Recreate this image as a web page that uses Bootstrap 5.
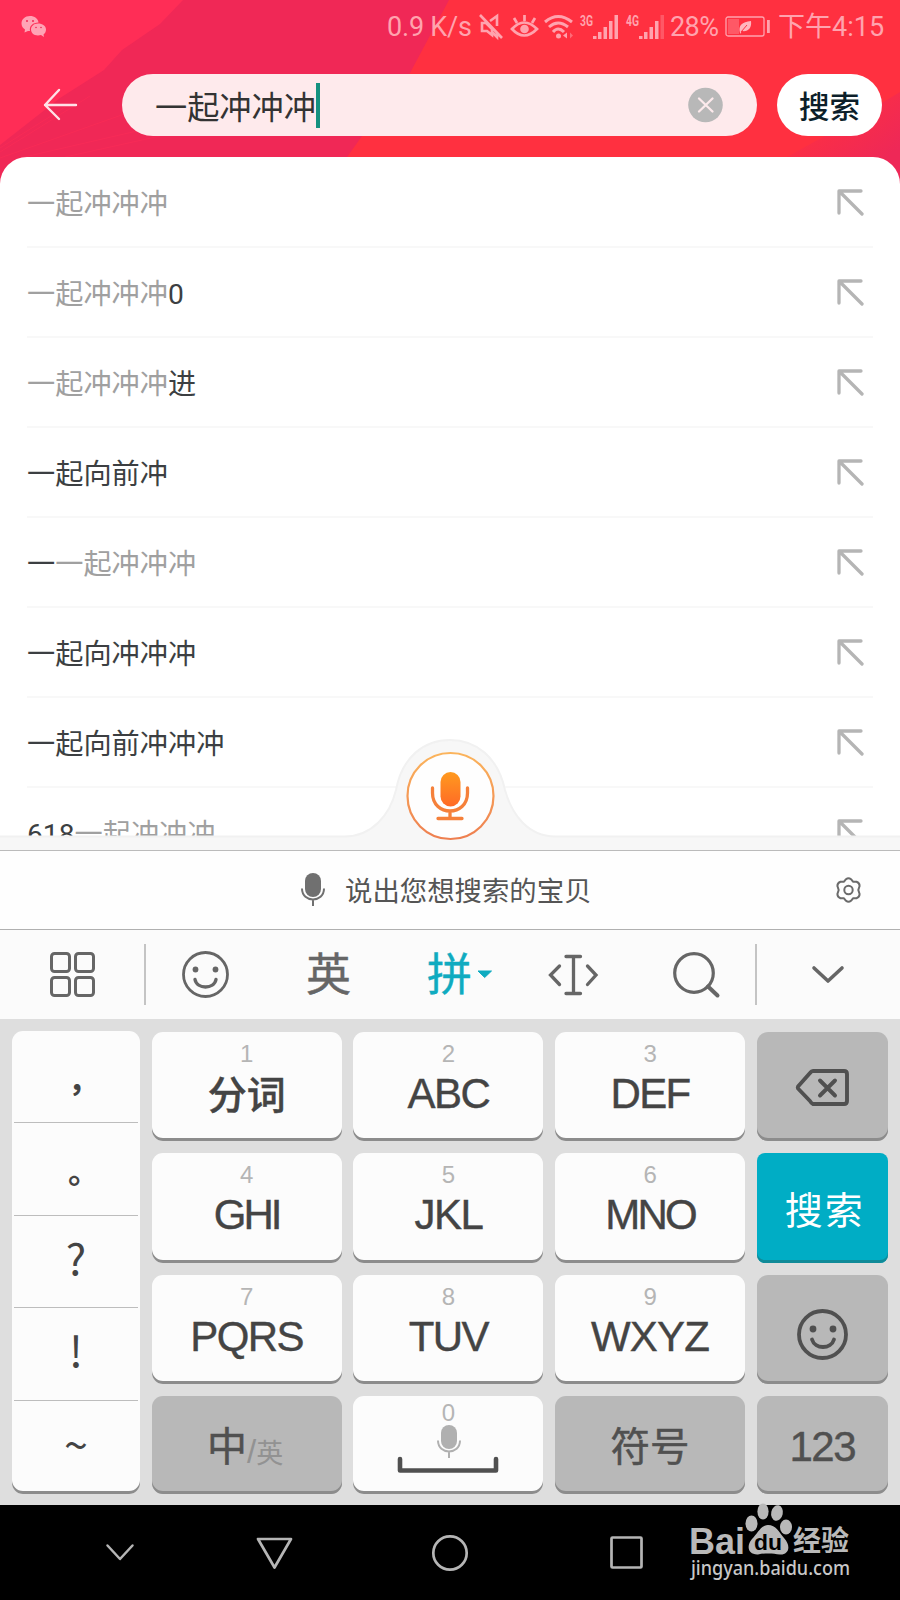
<!DOCTYPE html>
<html lang="zh-CN">
<head>
<meta charset="utf-8">
<meta name="viewport" content="width=device-width, initial-scale=1">
<title>搜索</title>
<link href="https://cdn.jsdelivr.net/npm/bootstrap@5.3.0/dist/css/bootstrap.min.css" rel="stylesheet">
<style>
body{width:900px;height:1600px;overflow:hidden;background:#fff;font-family:Roboto,"Noto Sans CJK SC",sans-serif;color:#333}
svg{display:block;flex:none;overflow:visible}
.top-area{height:184px;margin-bottom:-27px}
.top-bg{left:0;top:0;z-index:0}
.status{height:54px;padding:0 18px 0 21px;color:#ffa3ae;font-size:27px;line-height:58px;white-space:nowrap}
.status span{flex:none}
.searchrow{height:62px;margin-top:20px}
.field{width:635px;height:62px;border-radius:31px;background:#feeaec;margin-left:44px;padding-left:33px;font-size:32.2px;line-height:62px}
.field .typed{margin-top:5px}
.caret-bar{width:4.5px;height:45px;background:#15917f}
.go{width:105px;height:62px;border-radius:31px;background:#fff;margin-left:20px;font-size:30.5px;font-weight:500;color:#0c1f2a;line-height:68px;border:0;padding:0}
.panel{height:693px;border-radius:27px 27px 0 0;background:#fff;overflow:hidden;z-index:1;padding-top:1px}
.sugg{height:90px;margin:0 27px;border-bottom:2px solid #f8f8f8;font-size:28.2px;line-height:80px;padding-right:9px;color:#3c3f42}
.sugg span{margin-top:5px}
.sugg i{font-style:normal;color:#a0a0a0}
.sugg svg{margin-top:1px}
.bump{left:0;bottom:0}
.voice{height:80px;border-top:1px solid #bbb;border-bottom:1px solid #b0b0b0;background:#fefefe;font-size:27.4px;color:#555;padding:0 39px 0 300px}
.tools{height:89px;background:#fbfbfb}
.tools .cjk{font-size:45px;line-height:80px;color:#666;margin-top:3px;-webkit-text-stroke:.4px}
.vline{width:2px;height:61px;background:#c4c4c4}
.keys{height:486px;background:#dedede;padding:13px 12px 0 12px;display:grid;grid-template-columns:128px 190px 190px 190px 131px;grid-template-rows:109px 109.5px 109.5px 98px;gap:12px 11.7px}
.k{background:#fcfcfc;border-radius:11px;box-shadow:inset 0 -3px 0 #8c8c8c;text-align:center;color:#444;font-family:"Liberation Sans","Noto Sans CJK SC",sans-serif}
.k .n{display:block;font-size:24px;line-height:24px;padding-top:10px;color:#b5b5b5}
.k .l{display:block;font-size:42px;line-height:44px;margin-top:6px;letter-spacing:-1.6px;-webkit-text-stroke:.4px #444}
.k .tight{letter-spacing:-3px}
.g{background:#b8b8b8;color:#505050}
.k.go-key{background:#00adc5;color:#fff;border-radius:8px;box-shadow:inset 0 -3px 0 #108a98}
.side{grid-row:1/5;margin-top:-1px;font-family:"Noto Sans CJK SC",sans-serif;padding:0 2px}
.side div{height:92.4px;line-height:80px;font-size:43px;border-bottom:1px solid #bdbdbd;font-weight:400;overflow:hidden}
.side .full{font-size:32px;line-height:92px;font-weight:700}
.side div:last-child{border:0}
.navb{height:95px;background:#000}
.mark-name{font-family:"Liberation Sans","Noto Sans CJK SC",sans-serif}
</style>
</head>
<body>
<header class="top-area position-relative">
  <svg class="top-bg position-absolute" width="900" height="184">
    <defs><linearGradient id="cr" x1="0" y1="0" x2="1" y2="1"><stop offset=".2" stop-color="#ff3040"/><stop offset=".8" stop-color="#ee2857"/></linearGradient></defs>
    <rect width="900" height="184" fill="#f02856"/>
    <path d="M0 0H183L160 24 122 50 104 70 60 98 0 145Z" fill="#ff2d56"/>
    <path d="M449 0H900V184H328L362 136 410 73Z" fill="#ff3040"/>
    <path d="M785 158L850 122 900 92V184H785Z" fill="url(#cr)"/>
    <path d="M0 152L90 96M0 158L130 112M20 158L150 128M65 157L160 136M0 148L70 104" stroke="#ff2d56" stroke-width="1" opacity=".5"/>
  </svg>
  <div class="status position-relative d-flex align-items-center">
    <svg width="26" height="22" viewBox="0 0 26 22" fill="#ffa3b5"><path d="M9 0C4 0 .5 3.300.5 7.500.5 10 1.800 12 4 13.500L3.500 16.500 7 15H9C8 10 12 6.500 17.500 6.500 17 2.500 13.500 0 9 0Z"/><path d="M17 7.500C12.500 7.500 10 10.500 10 13.500S12.500 19.500 17 19.500L20 19 23 21 22.500 18.500C24 17.500 25 15.500 25 13.500 25 10 21.500 7.500 17 7.500Z"/><g fill="#f02856"><circle cx="6" cy="5" r="1"/><circle cx="12" cy="5" r="1"/><circle cx="15" cy="11.500" r=".8"/><circle cx="20" cy="11.500" r=".8"/></g></svg>
    <span style="width:86px;margin-left:340px;letter-spacing:-.2px">0.9 K/s</span>
    <svg style="margin-left:6px" width="25" height="26" fill="none" stroke="#ffa3ae" stroke-width="2.600"><path d="M1 1L23 24M3 9H7L13 15V21L8 17H3ZM11 7L18 2V12M18 19V23L13 18"/></svg>
    <svg style="margin-left:7px" width="27" height="26" fill="none" stroke="#ffa3ae" stroke-width="2.700"><path d="M1 15Q13 2 26 15 13 28 1 15ZM13.500 1V7M3 4L6 9M24 4L21 9"/><circle cx="13.500" cy="15" r="4.300" fill="#ffa3ae" stroke="none"/></svg>
    <svg style="margin-left:6px" width="29" height="26" fill="none" stroke="#ffa3ae" stroke-width="3"><path d="M1 8Q14 -3 28 8M5 13Q14 5 24 13M9 18Q14 12 20 18"/><circle cx="14.500" cy="22" r="2.500" fill="#ffa3ae" stroke="none"/><path d="M19 21.500L23 18.500V24.500Z" fill="#ffa3ae" stroke="none"/><path d="M26 18.500L29 21.500 26 24.500Z" fill="#ffa3ae" stroke="none" opacity=".5"/></svg>
    <svg style="margin-left:7px" width="40" height="26" fill="#ffa3ae"><text x="0" y="12" font-size="15" font-weight="700" textLength="13" lengthAdjust="spacingAndGlyphs">3G</text><path d="M13 22h3.500v3h-3.500zM18 18h3.500v7H18zM23.500 13h3.500v12h-3.500zM29 7h3.500v18H29zM34.500 1h3.500v24h-3.500z"/></svg>
    <svg style="margin-left:6px" width="40" height="26" fill="#ffa3ae"><text x="0" y="12" font-size="15" font-weight="700" textLength="13" lengthAdjust="spacingAndGlyphs">4G</text><path d="M13 22h3.500v3h-3.500zM18 18h3.500v7H18zM23.500 13h3.500v12h-3.500zM29 7h3.500v18H29z"/><path d="M34.500 1h3.500v24h-3.500z" opacity=".35"/></svg>
    <span style="width:50px;margin-left:4px;letter-spacing:-.6px">28%</span>
    <svg style="margin-left:5px" width="46" height="22"><rect x="1" y="1" width="38" height="19" rx="2" fill="none" stroke="#ffa3ae" stroke-width="1.300"/><rect x="3" y="3" width="11" height="15" fill="#ffa3ae" opacity=".35"/><path d="M15 17C13 9 17 6 26 5 27 12 23 16 17 15L15 18Z" fill="#ffb5bd"/><path d="M16 16L22 9" stroke="#ff3040"/><rect x="42" y="4" width="2.800" height="13" fill="#ffa3ae"/></svg>
    <span style="margin-left:7px">下午4:15</span>
  </div>
  <div class="searchrow position-relative d-flex align-items-center">
    <svg style="margin-left:43px" width="35" height="32" fill="none" stroke="#ffe1e7" stroke-width="2.400" stroke-linecap="round" stroke-linejoin="round"><path d="M33 16H2M16 1L2 16 16 30"/></svg>
    <div class="field d-flex align-items-center"><span class="typed">一起冲冲冲</span><span class="caret-bar"></span>
      <svg class="ms-auto" style="margin-right:34px" width="35" height="35"><circle cx="17.500" cy="17" r="17.300" fill="#b8b8b8"/><path d="M11 10.500L24.500 23.500M24.500 10.500L11 23.500" stroke="#fdeaec" stroke-width="2.300" stroke-linecap="round"/></svg>
    </div>
    <button class="go">搜索</button>
  </div>
</header>

<svg width="0" height="0" class="position-absolute"><defs>
  <symbol id="fill-arrow" viewBox="0 0 27 27"><path d="M2 24V2H24M3 3L25 25" fill="none" stroke="#b5b5b5" stroke-width="3.300" stroke-linecap="round" stroke-linejoin="round"/></symbol>
  <symbol id="mic" viewBox="0 0 24 34"><rect x="4" y="0" width="16" height="24" rx="8" fill="currentColor"/><path d="M1 15.500C1 30 23 30 23 15.500M12 26.500V33" fill="none" stroke="currentColor" stroke-width="2"/></symbol>
</defs></svg>

<main class="panel position-relative">
  <div class="sugg d-flex align-items-center justify-content-between"><span><i>一起冲冲冲</i></span><svg width="27" height="27"><use href="#fill-arrow"/></svg></div>
  <div class="sugg d-flex align-items-center justify-content-between"><span><i>一起冲冲冲</i>0</span><svg width="27" height="27"><use href="#fill-arrow"/></svg></div>
  <div class="sugg d-flex align-items-center justify-content-between"><span><i>一起冲冲冲</i>进</span><svg width="27" height="27"><use href="#fill-arrow"/></svg></div>
  <div class="sugg d-flex align-items-center justify-content-between"><span>一起向前冲</span><svg width="27" height="27"><use href="#fill-arrow"/></svg></div>
  <div class="sugg d-flex align-items-center justify-content-between"><span>一<i>一起冲冲冲</i></span><svg width="27" height="27"><use href="#fill-arrow"/></svg></div>
  <div class="sugg d-flex align-items-center justify-content-between"><span>一起向冲冲冲</span><svg width="27" height="27"><use href="#fill-arrow"/></svg></div>
  <div class="sugg d-flex align-items-center justify-content-between"><span>一起向前冲冲冲</span><svg width="27" height="27"><use href="#fill-arrow"/></svg></div>
  <div class="sugg d-flex align-items-center justify-content-between"><span>618<i>一起冲冲冲</i></span><svg width="27" height="27"><use href="#fill-arrow"/></svg></div>
  <svg class="bump position-absolute" width="900" height="113" viewBox="0 737 900 113">
    <defs><linearGradient id="org" x1="0" y1="0" x2="0" y2="1"><stop offset="0" stop-color="#ff9a1f"/><stop offset="1" stop-color="#ff6a26"/></linearGradient>
    <linearGradient id="ring" x1="0" y1="0" x2="0" y2="1"><stop offset="0" stop-color="#fbb45c"/><stop offset="1" stop-color="#ee7f50"/></linearGradient></defs>
    <path d="M-3 836.500H345C372 836 390 815 396 790 402 757 424 740 450 740S498 757 505 790C512 815 528 836 555 836.500H903V853H-3Z" fill="#f7f7f7" stroke="#f1f1f1" stroke-width="2"/>
    <circle cx="450.500" cy="796" r="43" fill="#fefefe" stroke="url(#ring)" stroke-width="2.200"/>
    <rect x="440.500" y="772" width="20" height="34.500" rx="10" fill="url(#org)"/>
    <path d="M432.500 788V793C432.500 817 467.500 817 467.500 793V788M450 811V818M438 818.500H462" fill="none" stroke="#f5803a" stroke-width="3.300" stroke-linecap="round"/>
  </svg>
</main>

<section class="voice d-flex align-items-center">
  <svg width="26" height="34" style="color:#707070"><use href="#mic" width="26" height="34"/></svg>
  <span style="margin-left:19px;margin-top:6px">说出您想搜索的宝贝</span>
  <svg class="ms-auto" width="25" height="26" viewBox="0 0 25 26" fill="none" stroke="#6b6b6b" stroke-width="2" stroke-linejoin="round"><path d="M10 2.200Q12.500 .2 15 2.200L17 4.700 20.500 4.800Q23.600 5.800 23.600 9L22.300 13 23.600 17Q23.600 20.200 20.500 21.200L17 21.300 15 23.800Q12.500 25.800 10 23.800L8 21.300 4.500 21.200Q1.400 20.200 1.400 17L2.700 13 1.400 9Q1.400 5.800 4.500 4.800L8 4.700Z"/><circle cx="12.500" cy="13" r="4.200"/></svg>
</section>

<section class="tools d-flex align-items-center">
  <svg style="margin-left:50px" width="45" height="45" fill="none" stroke="#666" stroke-width="3"><rect x="1.500" y="1.500" width="18" height="18" rx="3"/><rect x="25.500" y="1.500" width="18" height="18" rx="3"/><rect x="1.500" y="25.500" width="18" height="18" rx="3"/><rect x="25.500" y="25.500" width="18" height="18" rx="3"/></svg>
  <span class="vline" style="margin-left:49px"></span>
  <svg style="margin-left:36px" width="47" height="47" viewBox="0 0 47 47" fill="none" stroke="#666" stroke-width="2.800" stroke-linecap="round"><circle cx="23.500" cy="23.500" r="22"/><circle cx="13.500" cy="18.500" r="2.900" fill="#666" stroke="none"/><circle cx="33.500" cy="18.500" r="2.900" fill="#666" stroke="none"/><path d="M13 28.500C15 38.500 32 38.500 34 28.500" stroke-width="3.400"/></svg>
  <span class="cjk" style="margin-left:77px">英</span>
  <span class="cjk" style="margin-left:76px;color:#0fabc0">拼</span>
  <svg style="margin-left:5px" width="16" height="9"><path d="M1 1H14.500L7.700 7.500Z" fill="#0fabc0" stroke="#0fabc0" stroke-linejoin="round"/></svg>
  <svg style="margin-left:56px" width="49" height="42" fill="none" stroke="#666" stroke-width="3.300" stroke-linecap="round"><path d="M10.500 12L1.500 21 10.500 30.500M38.500 12L47 21 38.500 30.500M17 2.500H31.500M17 39.500H31.500M24.500 3V39" /></svg>
  <svg style="margin-left:75px" width="47" height="46" fill="none" stroke="#666" stroke-width="3.200"><circle cx="21" cy="21" r="19.300"/><path d="M35 34.500L44.500 43.500" stroke-width="4" stroke-linecap="round"/></svg>
  <span class="vline" style="margin-left:35px"></span>
  <svg style="margin-left:55px" width="32" height="18" fill="none" stroke="#666" stroke-width="3.600" stroke-linecap="round" stroke-linejoin="round"><path d="M2 2L16 15 30 2"/></svg>
</section>

<section class="keys">
  <div class="k side">
    <div class="full ps-3">，</div><div class="full ps-3">。</div><div>?</div><div>!</div><div style="line-height:82px">~</div>
  </div>
  <div class="k"><span class="n">1</span><span class="l" style="font-size:39px;font-weight:500;letter-spacing:0;padding-top:2px">分词</span></div>
  <div class="k"><span class="n">2</span><span class="l">ABC</span></div>
  <div class="k"><span class="n">3</span><span class="l">DEF</span></div>
  <div class="k g d-flex align-items-center justify-content-center"><svg style="margin-top:2px;margin-left:2px" width="54" height="37" fill="none" stroke="#505050" stroke-width="3.900" stroke-linecap="round" stroke-linejoin="round"><path d="M17 2H48Q51 2 51 5V32Q51 35 48 35H17Q15 34 14 32L2 19.500Q1.500 18.500 2 17.500L14 4Q15.500 2 17 2ZM24 11.500L39 26.500M39 11.500L24 26.500"/></svg></div>

  <div class="k"><span class="n">4</span><span class="l tight">GHI</span></div>
  <div class="k"><span class="n">5</span><span class="l">JKL</span></div>
  <div class="k"><span class="n">6</span><span class="l" style="letter-spacing:-2.800px">MNO</span></div>
  <div class="k go-key d-flex align-items-center justify-content-center"><span style="font-size:38px;letter-spacing:2px;margin-left:5px;margin-top:8px">搜索</span></div>

  <div class="k"><span class="n">7</span><span class="l">PQRS</span></div>
  <div class="k"><span class="n">8</span><span class="l">TUV</span></div>
  <div class="k"><span class="n">9</span><span class="l" style="letter-spacing:-.8px">WXYZ</span></div>
  <div class="k g d-flex align-items-center justify-content-center"><svg style="margin-top:11px" width="51" height="51" viewBox="0 0 51 51" fill="none" stroke="#505050" stroke-width="3.800" stroke-linecap="round"><circle cx="25.500" cy="25.500" r="23.500"/><circle cx="16" cy="20" r="3.400" fill="#505050" stroke="none"/><circle cx="36" cy="20" r="3.400" fill="#505050" stroke="none"/><path d="M15 30.500C18 40.500 34 40.500 37 30.500"/></svg></div>

  <div class="k g d-flex align-items-center justify-content-center"><span style="font-size:40px;margin-top:3px;margin-left:-3px;-webkit-text-stroke:.5px #505050">中</span><span style="font-size:27px;color:#929292;margin-top:14px"><span style="font-size:33px">/</span>英</span></div>
  <div class="k"><span class="n" style="padding-top:5px">0</span>
    <svg class="mx-auto" width="100" height="48"><use href="#mic" x="38" y="0" width="26" height="34" color="#b0b0b0"/><path d="M2 34V45.500H98V34" fill="none" stroke="#505050" stroke-width="4.600" stroke-linecap="round" stroke-linejoin="round"/></svg></div>
  <div class="k g d-flex align-items-center justify-content-center"><span style="font-size:39.500px;margin-top:6px;-webkit-text-stroke:.5px #505050">符号</span></div>
  <div class="k g d-flex align-items-center justify-content-center"><span style="font-size:42px;letter-spacing:-1.600px;margin-top:3px;-webkit-text-stroke:.4px #505050">123</span></div>
</section>

<nav class="navb d-flex align-items-center">
  <svg style="margin-left:106px" width="28" height="17" fill="none" stroke="#b5b5b5" stroke-width="2.500" stroke-linecap="round" stroke-linejoin="round"><path d="M1.500 1.500L14 15 26.500 1.500"/></svg>
  <svg style="margin-left:122px" width="37" height="32" fill="none" stroke="#b5b5b5" stroke-width="2.700" stroke-linejoin="round"><path d="M2 2H35L18.500 30.500Z"/></svg>
  <svg style="margin-left:139px" width="36" height="36"><circle cx="18" cy="18" r="16.700" fill="none" stroke="#b5b5b5" stroke-width="2.700"/></svg>
  <svg style="margin-left:142px" width="33" height="33"><rect x="1.500" y="1.500" width="30" height="30" rx="1" fill="none" stroke="#b5b5b5" stroke-width="2.700"/></svg>
  <svg class="mark-name align-self-start" style="margin-left:47px" width="162" height="95" viewBox="690 1505 162 95" fill="#b9b9b9">
    <text x="689" y="1554" font-size="37" font-weight="700" textLength="56" lengthAdjust="spacingAndGlyphs">Bai</text>
    <ellipse cx="751.500" cy="1523.500" rx="6" ry="8"/><ellipse cx="763" cy="1511.500" rx="5.600" ry="8"/><ellipse cx="777" cy="1513" rx="5.800" ry="7.800" transform="rotate(12 777 1513)"/><ellipse cx="786" cy="1527" rx="6" ry="7.600"/>
    <path d="M768 1525C776 1525 779 1532 784 1538 792 1547 788 1555 780 1554.500 772 1553 766 1553 758 1554.500 748 1555 746 1546 752 1539 758 1533 761 1525 768 1525Z"/>
    <text x="754" y="1550" font-size="22" font-weight="700" fill="#000" textLength="28" lengthAdjust="spacingAndGlyphs">du</text>
    <text x="793" y="1551" font-size="28" font-weight="700" textLength="56" lengthAdjust="spacingAndGlyphs">经验</text>
    <text x="691" y="1575" font-size="20" textLength="159" lengthAdjust="spacingAndGlyphs" font-family="Noto Sans, sans-serif" font-weight="500" fill="#c8c8c8">jingyan.baidu.com</text>
  </svg>
</nav>
<script src="https://cdn.jsdelivr.net/npm/bootstrap@5.3.0/dist/js/bootstrap.bundle.min.js"></script>
</body>
</html>
